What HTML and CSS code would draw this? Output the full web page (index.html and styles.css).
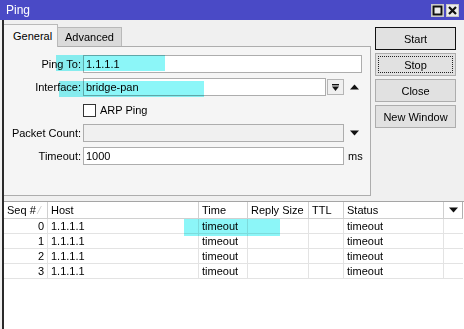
FILE: index.html
```html
<!DOCTYPE html>
<html>
<head>
<meta charset="utf-8">
<link rel="stylesheet" href="styles.css">
</head>
<body>
<div class="titlebar">
  <span class="title">Ping</span>
  <div class="tb-btns">
    <span class="tb-btn"><svg width="11" height="11" viewBox="0 0 11 11"><rect x="1.5" y="1.5" width="8" height="8" fill="none" stroke="#111" stroke-width="2"/></svg></span>
    <span class="tb-btn"><svg width="11" height="11" viewBox="0 0 11 11"><path d="M2 2 L9 9 M9 2 L2 9" stroke="#111" stroke-width="2.2"/></svg></span>
  </div>
</div>
<div class="win">
  <div class="top">
    <div class="left">
      <div class="tabs">
        <div class="tab active">General</div>
        <div class="tab">Advanced</div>
      </div>
      <div class="panel">
        <div class="row">
          <label class="lbl">Ping To:</label>
          <div class="field"><div class="input w-full">1.1.1.1</div></div>
        </div>
        <div class="row">
          <label class="lbl">Interface:</label>
          <div class="field">
            <div class="input grow">bridge-pan</div>
            <span class="dd-btn"><svg width="9" height="9" viewBox="0 0 9 9"><rect x="1" y="1" width="7" height="1.4" fill="#111"/><path d="M1 3.5 H8 L4.5 8 Z" fill="#111"/></svg></span>
            <span class="arrow"><svg width="9" height="6" viewBox="0 0 9 6"><path d="M0 5.5 L4.5 0.5 L9 5.5 Z" fill="#111"/></svg></span>
          </div>
        </div>
        <div class="row">
          <span class="lbl"></span>
          <div class="field"><span class="checkbox"></span><span class="cb-label">ARP Ping</span></div>
        </div>
        <div class="row">
          <label class="lbl">Packet Count:</label>
          <div class="field">
            <div class="input short disabled"></div>
            <span class="arrow"><svg width="9" height="6" viewBox="0 0 9 6"><path d="M0 0.5 L9 0.5 L4.5 5.5 Z" fill="#111"/></svg></span>
          </div>
        </div>
        <div class="row">
          <label class="lbl">Timeout:</label>
          <div class="field">
            <div class="input short">1000</div>
            <span class="unit">ms</span>
          </div>
        </div>
      </div>
    </div>
    <div class="btns">
      <div class="btn default">Start</div>
      <div class="btn focus"><span>Stop</span></div>
      <div class="btn">Close</div>
      <div class="btn">New Window</div>
    </div>
  </div>
  <div class="table">
    <div class="th num">Seq # <span class="sort">⁄</span></div>
    <div class="th">Host</div>
    <div class="th">Time</div>
    <div class="th">Reply Size</div>
    <div class="th">TTL</div>
    <div class="th">Status</div>
    <div class="th menu"><svg width="9" height="6" viewBox="0 0 9 6"><path d="M0 0.5 L9 0.5 L4.5 5.5 Z" fill="#111"/></svg></div>

    <div class="td num">0</div><div class="td">1.1.1.1</div><div class="td">timeout</div><div class="td"></div><div class="td"></div><div class="td">timeout</div><div class="td last"></div>
    <div class="td num">1</div><div class="td">1.1.1.1</div><div class="td">timeout</div><div class="td"></div><div class="td"></div><div class="td">timeout</div><div class="td last"></div>
    <div class="td num">2</div><div class="td">1.1.1.1</div><div class="td">timeout</div><div class="td"></div><div class="td"></div><div class="td">timeout</div><div class="td last"></div>
    <div class="td num">3</div><div class="td">1.1.1.1</div><div class="td">timeout</div><div class="td"></div><div class="td"></div><div class="td">timeout</div><div class="td last"></div>
  </div>
</div>
<div class="hl hl-ping"></div>
<div class="hl hl-iface"></div>
<div class="hl hl-time"></div>
</body>
</html>
```

FILE: styles.css
```css
* { box-sizing: border-box; }
html, body { margin: 0; padding: 0; }
body {
  width: 464px;
  height: 329px;
  overflow: hidden;
  background: #f0f0f0;
  font-family: "Liberation Sans", Arial, sans-serif;
  font-size: 11px;
  color: #000;
  position: relative;
}
.titlebar {
  height: 20px;
  background: #4a4ac6;
  display: flex;
  align-items: center;
  justify-content: space-between;
  padding: 0 5px 0 6px;
}
.title { color: #fff; font-size: 12px; }
.tb-btns { display: flex; gap: 2px; margin-top: 1px; }
.tb-btn {
  width: 13px; height: 13px;
  background: #ececec;
  border: 1px solid #c8c8c8;
  display: flex; align-items: center; justify-content: center;
}
.win {
  margin-left: 2px;
  border-left: 2px solid #2a2a2a;
  height: 309px;
  display: flex;
  flex-direction: column;
}
.top {
  display: flex;
  padding-top: 4px;
}
.left { width: 367px; }
.tabs { display: flex; align-items: flex-end; height: 22px; }
.tab {
  height: 19px;
  padding: 0 7px;
  border: 1px solid #b9b9b9;
  border-bottom: none;
  background: #dadada;
  display: flex; align-items: center;
  margin-left: -1px;
}
.tab.active {
  height: 23px;
  margin-left: 0;
  margin-bottom: -1px;
  background: #f5f5f5;
  padding: 0 9px;
  border-left: none;
  position: relative;
  z-index: 1;
  width: 54px;
}
.panel {
  height: 150px;
  border: 1px solid #adadad;
  border-left: none;
  background: #f5f5f5;
  padding: 8px 0 0 0;
  display: flex;
  flex-direction: column;
  gap: 5px;
}
.row { display: flex; align-items: center; height: 18px; gap: 2px; }
.lbl { width: 77px; text-align: right; white-space: nowrap; }
.field { display: flex; align-items: center; height: 18px; }
.input {
  height: 18px;
  border: 1px solid #adadad;
  background: #fff;
  padding: 0 0 0 2px;
  line-height: 16px;
}
.w-full { width: 279px; }
.grow { width: 243px; }
.short { width: 261px; }
.disabled { background: #f0f0f0; }
.dd-btn {
  width: 17px; height: 16px;
  margin-left: 1px;
  border: 1px solid #b5b5b5;
  background: #f0f0f0;
  display: flex; align-items: center; justify-content: center;
}
.arrow { width: 18px; display: flex; justify-content: center; align-items: center; margin-left: 1px; }
.checkbox {
  width: 13px; height: 13px;
  border: 1px solid #333;
  background: #fff;
}
.cb-label { margin-left: 4px; }
.unit { margin-left: 4px; }
.btns {
  margin-left: 4px;
  padding-top: 3px;
  display: flex;
  flex-direction: column;
  gap: 3px;
  width: 81px;
}
.btn {
  height: 23px;
  border: 1px solid #adadad;
  background: #e1e1e1;
  display: flex; align-items: center; justify-content: center;
}
.btn.default { border-color: #111; }
.btn.focus { padding: 2px; }
.btn.focus span {
  flex: 1; align-self: stretch;
  border: 1px dotted #222;
  display: flex; align-items: center; justify-content: center;
}
.table {
  margin-top: 5px;
  flex: 1;
  background: #fff;
  border-top: 1px solid #a5a5a5;
  display: grid;
  grid-template-columns: 44px 151px 49px 61px 35px 100px 19px;
  grid-auto-rows: 15px;
  grid-template-rows: 17px;
  align-content: start;
}
.th {
  border-right: 1px solid #d0d0d0;
  border-bottom: 1px solid #d0d0d0;
  padding-left: 3px;
  display: flex; align-items: center;
  background: #fff;
  white-space: nowrap;
}
.th.menu { justify-content: center; padding: 0; border-right: 1px solid #b0b0b0; }
.th.num { justify-content: flex-start; }
.sort { color: #c4c4c4; margin-left: 3px; font-size: 10px; }
.td {
  border-right: 1px solid #e3e3e3;
  border-bottom: 1px solid #e3e3e3;
  padding-left: 3px;
  line-height: 14px;
  white-space: nowrap;
}
.td.last { border-right: none; }
.td.num { text-align: right; padding: 0 3px 0 0; }
.hl {
  position: absolute;
  background: #8cf6f8;
  mix-blend-mode: multiply;
}
.hl-ping { left: 56px; top: 55px; width: 109px; height: 16px; }
.hl-iface { left: 59px; top: 81px; width: 145px; height: 16px; }
.hl-time { left: 184px; top: 219px; width: 96px; height: 17px; }
```
